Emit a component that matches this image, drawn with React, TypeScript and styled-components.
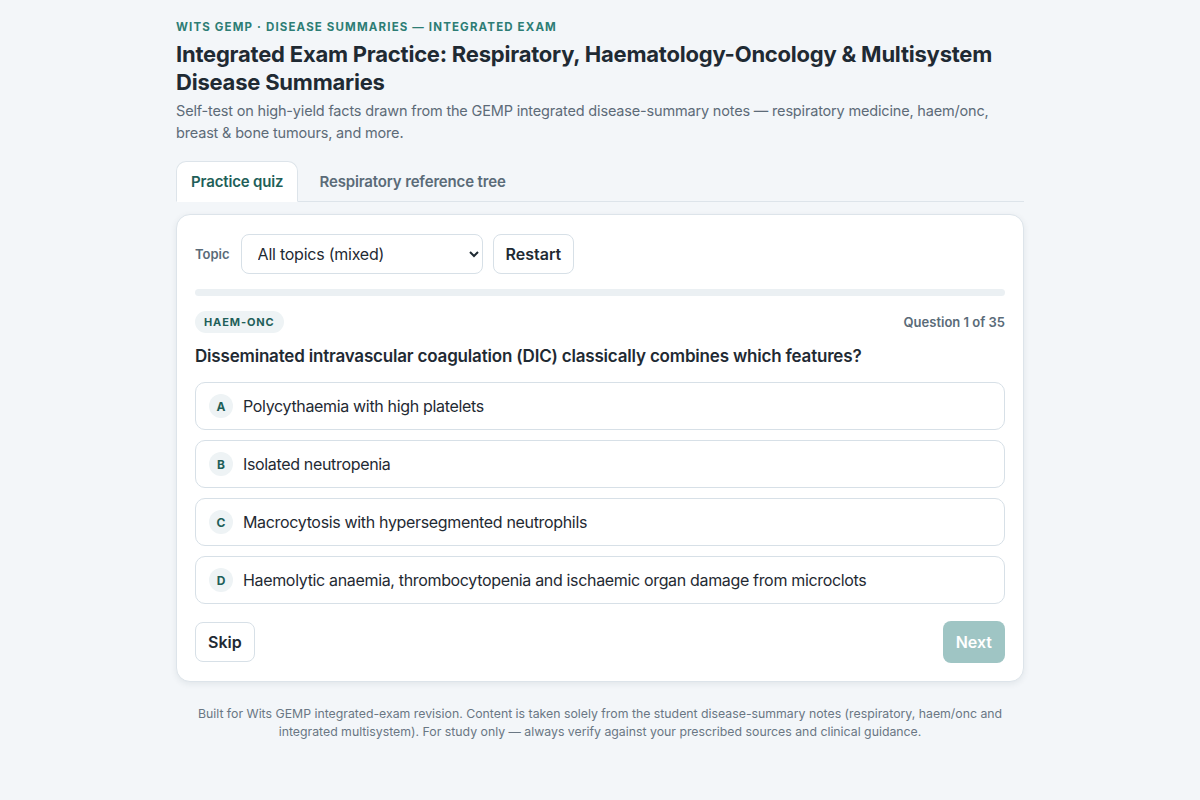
import React, { useState } from "react";
import styled, { createGlobalStyle } from "styled-components";

const Global = createGlobalStyle`
  html, body { margin: 0; padding: 0; background: #f3f6f9; }
  body { font-family: Inter, "Noto Sans", sans-serif; color: #1f2a33; -webkit-font-smoothing: antialiased; }
  * { box-sizing: border-box; }
`;

const Page = styled.div`
  max-width: 848px;
  margin: 0 auto;
  padding: 20px 0 40px;
`;

const Eyebrow = styled.div`
  font-size: 11.5px;
  font-weight: 700;
  letter-spacing: 0.1em;
  text-transform: uppercase;
  color: #2d7d75;
  line-height: 14px;
`;

const Title = styled.h1`
  margin: 6px 0 0;
  font-size: 22px;
  line-height: 28px;
  font-weight: 700;
  color: #1f2a33;
  letter-spacing: -0.01em;
`;

const Subtitle = styled.p`
  margin: 4px 0 0;
  font-size: 14.5px;
  line-height: 22px;
  color: #5d6b78;
  letter-spacing: -0.012em;
`;

const Tabs = styled.div`
  display: flex;
  margin-top: 17px;
  border-bottom: 1px solid #dde4ea;
  gap: 6px;
`;

const Tab = styled.button<{ $active?: boolean }>`
  font-family: inherit;
  font-size: 15px;
  font-weight: 600;
  letter-spacing: -0.01em;
  height: 41px;
  padding: 0 14px;
  margin-bottom: -1px;
  border: 1px solid ${(p) => (p.$active ? "#dde4ea" : "transparent")};
  border-bottom-color: ${(p) => (p.$active ? "#ffffff" : "transparent")};
  border-radius: 10px 10px 0 0;
  background: ${(p) => (p.$active ? "#ffffff" : "transparent")};
  color: ${(p) => (p.$active ? "#1f5f59" : "#5a6b78")};
  cursor: pointer;
`;

const Card = styled.div`
  margin-top: 12px;
  background: #ffffff;
  border: 1px solid #dde4ea;
  border-radius: 14px;
  padding: 19px 18px 18px;
  box-shadow: 0 2px 6px rgba(30, 50, 70, 0.08);
`;

const Controls = styled.div`
  display: flex;
  align-items: center;
  gap: 10px;
`;

const Label = styled.label`
  font-size: 13px;
  font-weight: 600;
  color: #5a6b78;
  margin-right: 1px;
`;

const Select = styled.select`
  font-family: inherit;
  width: 242px;
  height: 40px;
  padding: 0 10px 0 12px;
  font-size: 16px;
  letter-spacing: -0.015em;
  color: #1f2a33;
  background: #fff;
  border: 1px solid #d7e0e7;
  border-radius: 8px;
`;

const Button = styled.button<{ $primary?: boolean; $disabled?: boolean }>`
  font-family: inherit;
  font-size: 16px;
  font-weight: 600;
  height: ${(p) => (p.$primary ? "42px" : "40px")};
  padding: 0 12px;
  border-radius: 8px;
  border: 1px solid ${(p) => (p.$primary ? "transparent" : "#d7e0e7")};
  background: ${(p) => (p.$primary ? (p.$disabled ? "#9fc5c4" : "#2d7d75") : "#ffffff")};
  color: ${(p) => (p.$primary ? "#ffffff" : "#1f2a33")};
  cursor: pointer;
`;

const Progress = styled.div`
  margin-top: 15px;
  height: 7px;
  border-radius: 4px;
  background: #ebf0f3;
  overflow: hidden;
`;

const ProgressFill = styled.div`
  height: 100%;
  background: #2d7d75;
`;

const MetaRow = styled.div`
  display: flex;
  align-items: center;
  justify-content: space-between;
  margin-top: 15px;
`;

const TagPill = styled.span`
  display: inline-flex;
  align-items: center;
  height: 22px;
  padding: 0 9px;
  border-radius: 11px;
  background: #eef3f5;
  color: #1f5f59;
  font-size: 11px;
  font-weight: 700;
  letter-spacing: 0.08em;
`;

const Counter = styled.span`
  font-size: 13px;
  font-weight: 600;
  color: #5a6b78;
`;

const Question = styled.h2`
  margin: 11px 0 0;
  font-size: 17px;
  line-height: 24px;
  font-weight: 600;
  color: #1f2a33;
  letter-spacing: -0.011em;
`;

const Options = styled.div`
  margin-top: 14px;
  display: flex;
  flex-direction: column;
  gap: 10px;
`;

const Option = styled.button`
  font-family: inherit;
  display: flex;
  align-items: center;
  gap: 10px;
  width: 100%;
  height: 48px;
  padding: 0 13px;
  background: #fff;
  border: 1px solid #d7e0e7;
  border-radius: 10px;
  text-align: left;
  font-size: 16px;
  letter-spacing: -0.021em;
  color: #1f2a33;
  cursor: pointer;
`;

const Letter = styled.span`
  flex: none;
  width: 24px;
  height: 24px;
  border-radius: 50%;
  background: #eef3f5;
  color: #1f5f59;
  font-size: 12px;
  font-weight: 700;
  letter-spacing: 0;
  display: flex;
  align-items: center;
  justify-content: center;
`;

const Footer = styled.div`
  display: flex;
  justify-content: space-between;
  align-items: center;
  margin-top: 17px;
`;

const Note = styled.p`
  margin: 23px auto 0;
  max-width: 848px;
  text-align: center;
  font-size: 12.3px;
  line-height: 18px;
  color: #6a7784;
`;

const options = [
  "Polycythaemia with high platelets",
  "Isolated neutropenia",
  "Macrocytosis with hypersegmented neutrophils",
  "Haemolytic anaemia, thrombocytopenia and ischaemic organ damage from microclots",
];

export default function App() {
  const [tab, setTab] = useState(0);
  return (
    <>
      <Global />
      <Page>
        <Eyebrow>Wits GEMP · Disease summaries — Integrated exam</Eyebrow>
        <Title>
          Integrated Exam Practice: Respiratory, Haematology-Oncology &amp; Multisystem Disease Summaries
        </Title>
        <Subtitle>
          Self-test on high-yield facts drawn from the GEMP integrated disease-summary notes — respiratory medicine,
          haem/onc, breast &amp; bone tumours, and more.
        </Subtitle>
        <Tabs>
          <Tab $active={tab === 0} onClick={() => setTab(0)}>Practice quiz</Tab>
          <Tab $active={tab === 1} onClick={() => setTab(1)}>Respiratory reference tree</Tab>
        </Tabs>
        <Card>
          <Controls>
            <Label htmlFor="topic">Topic</Label>
            <Select id="topic" defaultValue="all">
              <option value="all">All topics (mixed)</option>
              <option value="resp">Respiratory</option>
              <option value="haem">Haem-onc</option>
            </Select>
            <Button>Restart</Button>
          </Controls>
          <Progress>
            <ProgressFill style={{ width: "0%" }} />
          </Progress>
          <MetaRow>
            <TagPill>HAEM-ONC</TagPill>
            <Counter>Question 1 of 35</Counter>
          </MetaRow>
          <Question>Disseminated intravascular coagulation (DIC) classically combines which features?</Question>
          <Options>
            {options.map((o, i) => (
              <Option key={o}>
                <Letter>{"ABCD"[i]}</Letter>
                {o}
              </Option>
            ))}
          </Options>
          <Footer>
            <Button>Skip</Button>
            <Button $primary $disabled>Next</Button>
          </Footer>
        </Card>
        <Note>
          Built for Wits GEMP integrated-exam revision. Content is taken solely from the student disease-summary notes
          (respiratory, haem/onc and integrated multisystem). For study only — always verify against your prescribed
          sources and clinical guidance.
        </Note>
      </Page>
    </>
  );
}
